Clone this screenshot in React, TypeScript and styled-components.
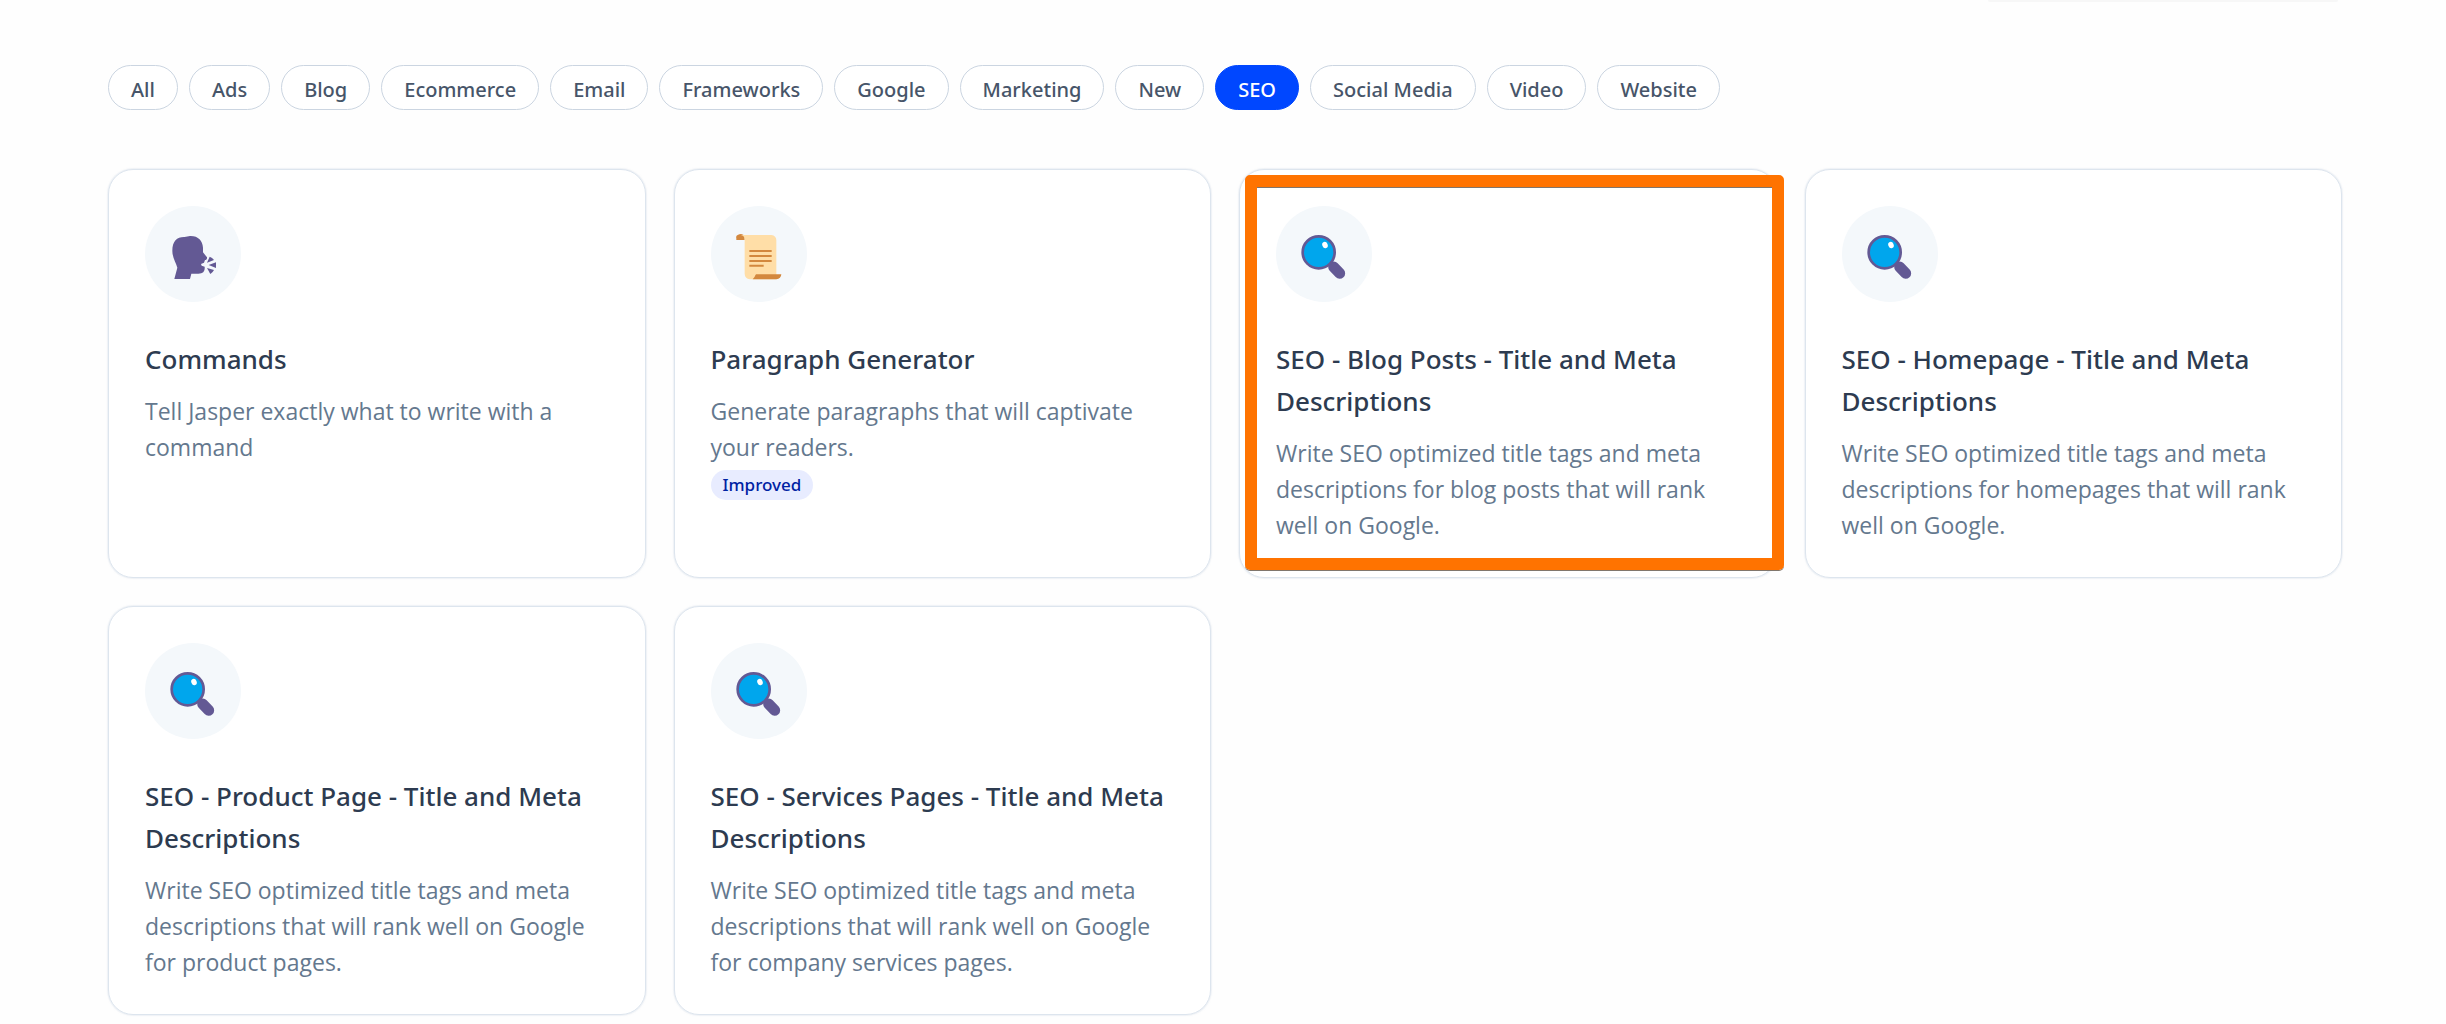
import React, { useState } from "react";
import styled, { createGlobalStyle } from "styled-components";

const GlobalStyle = createGlobalStyle`
  *, *::before, *::after { box-sizing: border-box; }
  body {
    margin: 0;
    background: #fefefe;
    font-family: "Noto Sans", "Open Sans", sans-serif;
  }
`;

const Page = styled.main`
  padding: 0 104px 6px 108px;
`;

const TopEdge = styled.div`
  display: flex;
  justify-content: flex-end;
  height: 65px;
  padding-right: 4px;
`;

const SearchEdge = styled.div`
  width: 350px;
  height: 2px;
  border-radius: 0 0 4px 4px;
  background: #f7f7f7;
`;

const Filters = styled.nav`
  display: flex;
  flex-wrap: wrap;
  gap: 11px;
  margin-bottom: 59px;
`;

const Pill = styled.button<{ $active: boolean }>`
  height: 45px;
  padding: 4px 22px 0;
  border: 1px solid ${(p) => (p.$active ? "#0047ff" : "#cbd5e1")};
  border-radius: 23px;
  background: ${(p) => (p.$active ? "#0047ff" : "#ffffff")};
  color: ${(p) => (p.$active ? "#ffffff" : "#475569")};
  font-family: inherit;
  font-size: 20px;
  font-weight: 500;
  line-height: 30px;
  white-space: nowrap;
  cursor: pointer;
`;

const Grid = styled.section`
  display: grid;
  grid-template-columns: repeat(4, minmax(0, 1fr));
  grid-auto-rows: 1fr;
  gap: 28px;
`;

const Card = styled.a`
  position: relative;
  display: flex;
  flex-direction: column;
  align-items: flex-start;
  padding: 36px 36px 34px;
  border: 1px solid #dde5ee;
  border-radius: 25px;
  background: #ffffff;
  box-shadow: 0 0 1px 1px rgba(226, 232, 240, 0.5);
  text-decoration: none;
`;

const IconCircle = styled.span`
  display: block;
  width: 96px;
  height: 96px;
  margin-bottom: 36px;
  border-radius: 50%;
  background: #f4f8fb;

  svg {
    display: block;
    width: 100%;
    height: 100%;
  }
`;

const Title = styled.h2`
  margin: 0 0 13px;
  color: #2d3b50;
  font-size: 26px;
  font-weight: 500;
  line-height: 42px;
`;

const Description = styled.p`
  margin: 0;
  color: #64788e;
  font-family: "Open Sans", "Noto Sans", sans-serif;
  font-size: 23px;
  line-height: 36px;
`;

const Badge = styled.span`
  margin-top: 5px;
  padding: 0 12px;
  border-radius: 15px;
  background: #e8ecff;
  color: #0022a3;
  font-size: 17px;
  font-weight: 500;
  line-height: 30px;
`;

const Highlight = styled.span`
  position: absolute;
  inset: 5px -8px 7px 5px;
  border: 12px solid #ff7300;
  border-radius: 5px;
  box-shadow: 0 1px 0 #80766c, inset 0 1px 0 #80766c;
  pointer-events: none;
`;

const SpeakingHead = () => (
  <svg viewBox="15 18 288 288" aria-hidden="true" fill="#635994">
    <path d="M97 152C97 123 112 110 134 111L150 108C174 107 188 122 189 143V157L201 172C202 177 199 180 195 180L192 188L183 192L185 197L194 200C195 214 190 221 175 221H154L150 237H103L112 203C108 187 97 174 97 152Z" />
    <path d="M201 188L209 170Q217 173 222 180Z" />
    <path d="M206 195L228 187V204Z" />
    <path d="M201 204L222 210Q218 218 211 222Z" />
  </svg>
);

const Scroll = () => (
  <svg viewBox="30 18 288 288" aria-hidden="true">
    <path d="M106 120V116A13 11 0 0 1 131 110V120Z" fill="#d3883e" />
    <path d="M119 105H211Q226 107 226 121V238H147Q131 235 131 221V119Q131 107 119 105Z" fill="#ffdea7" />
    <path d="M165 223H241Q240 237 226 238H155Q161 233 163 226Z" fill="#d3883e" />
    <path d="M145 153H212M145 168H212M145 183H212M145 197H188" stroke="#d3883e" strokeWidth="6" fill="none" />
  </svg>
);

const Magnifier = () => (
  <svg viewBox="33 18 288 288" aria-hidden="true">
    <path d="M187 184L204 200" stroke="#635994" strokeWidth="12" />
    <path d="M206 201L224 220" stroke="#635994" strokeWidth="33" strokeLinecap="round" />
    <circle cx="161" cy="157" r="48" fill="#00a6ed" stroke="#635994" strokeWidth="8" />
    <ellipse cx="180" cy="135" rx="8" ry="10" fill="#ffffff" transform="rotate(-22 180 135)" />
  </svg>
);

const categories = [
  "All", "Ads", "Blog", "Ecommerce", "Email", "Frameworks", "Google",
  "Marketing", "New", "SEO", "Social Media", "Video", "Website",
];

type Template = {
  icon: React.ComponentType;
  title: string;
  text: string;
  badge?: string;
  highlighted?: boolean;
};

const templates: Template[] = [
  { icon: SpeakingHead, title: "Commands", text: "Tell Jasper exactly what to write with a command" },
  { icon: Scroll, title: "Paragraph Generator", text: "Generate paragraphs that will captivate your readers.", badge: "Improved" },
  {
    icon: Magnifier,
    title: "SEO - Blog Posts - Title and Meta Descriptions",
    text: "Write SEO optimized title tags and meta descriptions for blog posts that will rank well on Google.",
    highlighted: true,
  },
  {
    icon: Magnifier,
    title: "SEO - Homepage - Title and Meta Descriptions",
    text: "Write SEO optimized title tags and meta descriptions for homepages that will rank well on Google.",
  },
  {
    icon: Magnifier,
    title: "SEO - Product Page - Title and Meta Descriptions",
    text: "Write SEO optimized title tags and meta descriptions that will rank well on Google for product pages.",
  },
  {
    icon: Magnifier,
    title: "SEO - Services Pages - Title and Meta Descriptions",
    text: "Write SEO optimized title tags and meta descriptions that will rank well on Google for company services pages.",
  },
];

export default function App() {
  const [active, setActive] = useState("SEO");

  return (
    <>
      <GlobalStyle />
      <Page>
        <TopEdge>
          <SearchEdge />
        </TopEdge>
        <Filters aria-label="Template categories">
          {categories.map((name) => (
            <Pill
              key={name}
              type="button"
              $active={name === active}
              aria-pressed={name === active}
              onClick={() => setActive(name)}
            >
              {name}
            </Pill>
          ))}
        </Filters>
        <Grid>
          {templates.map(({ icon: Icon, title, text, badge, highlighted }) => (
            <Card key={title} href="#">
              <IconCircle>
                <Icon />
              </IconCircle>
              <Title>{title}</Title>
              <Description>{text}</Description>
              {badge && <Badge>{badge}</Badge>}
              {highlighted && <Highlight />}
            </Card>
          ))}
        </Grid>
      </Page>
    </>
  );
}
